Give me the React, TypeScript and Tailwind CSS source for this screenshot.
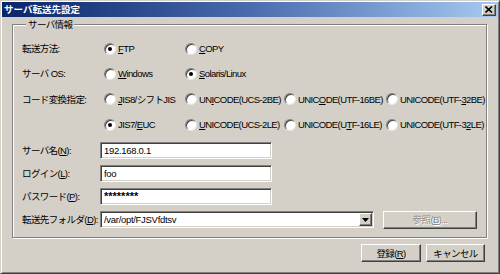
import type { ReactNode } from 'react';

const sunken =
  'border border-t-[#808080] border-l-[#808080] border-r-white border-b-white shadow-[inset_1px_1px_0_#404040,inset_-1px_-1px_0_#d4d0c8]';
const raised =
  'border border-t-white border-l-white border-r-[#404040] border-b-[#404040] shadow-[inset_-1px_-1px_0_#808080,inset_1px_1px_0_#d4d0c8]';

const K = ({ children }: { children: ReactNode }) => <span className="underline">{children}</span>;

const Radio = ({ checked = false, children }: { checked?: boolean; children: ReactNode }) => (
  <span className="flex items-center">
    <span className="shrink-0 flex items-center justify-center w-[12px] h-[12px] rounded-full bg-white border border-t-[#808080] border-l-[#808080] border-r-[#e8e6e0] border-b-[#e8e6e0] shadow-[inset_1px_1px_0_#404040]">
      {checked && <span className="w-[4px] h-[4px] rounded-full bg-black" />}
    </span>
    <span className="ml-[2px] whitespace-nowrap">{children}</span>
  </span>
);

const TextRow = ({
  label,
  value,
  first = false,
  secret = false,
}: {
  label: ReactNode;
  value: string;
  first?: boolean;
  secret?: boolean;
}) => (
  <div className={`flex items-center h-[23px] ${first ? 'mt-[2px]' : ''}`}>
    <span className="w-[78px] whitespace-nowrap">{label}</span>
    <div
      className={`w-[172px] h-[17px] bg-white flex items-center pl-[3px] ${
        secret ? 'text-[11px] font-bold tracking-normal' : 'text-[9.5px] tracking-[-0.3px]'
      } ${sunken}`}
    >
      {value}
    </div>
  </div>
);

export default function App() {
  return (
    <div className="w-[500px] h-[274px] bg-[#d4d0c8] flex flex-col p-[1px] border border-t-[#d4d0c8] border-l-[#d4d0c8] border-r-[#404040] border-b-[#404040] shadow-[inset_1px_1px_0_#fff,inset_-1px_-1px_0_#808080] text-[9.5px] tracking-[-0.6px] text-black leading-[13px] font-['Liberation_Sans','Noto_Sans_CJK_JP',sans-serif] select-none overflow-hidden">
      {/* title bar */}
      <div className="h-[15px] flex items-center bg-linear-to-r from-[#0a246a] via-[#4a6cae] to-[#a6caf0]">
        <span className="pl-[2px] text-white font-bold text-[9.5px] tracking-normal font-['Noto_Sans_CJK_JP',sans-serif]">
          サーバ転送先設定
        </span>
        <button
          type="button"
          className={`ml-auto mr-[2px] w-[14px] h-[12px] bg-[#d4d0c8] flex items-center justify-center ${raised}`}
        >
          <svg width="8" height="7" viewBox="0 0 8 7">
            <path d="M0.5 0.5 L7 6.5 M7 0.5 L0.5 6.5" stroke="#000" strokeWidth="1.6" />
          </svg>
        </button>
      </div>

      {/* server info group */}
      <fieldset className="mt-[1px] ml-[10px] mr-[11px] border border-[#808080] shadow-[1px_1px_0_#fff,inset_1px_1px_0_#fff] pl-[9px] pt-[5px] pb-[6px]">
        <legend className="ml-[4px] px-[2px] bg-[#d4d0c8]">サーバ情報</legend>

        <div className="flex items-center h-[25px]">
          <span className="w-[82px]">転送方法:</span>
          <div className="w-[81px]">
            <Radio checked><K>F</K>TP</Radio>
          </div>
          <Radio><K>C</K>OPY</Radio>
        </div>

        <div className="flex items-center h-[25px]">
          <span className="w-[82px]">サーバ OS:</span>
          <div className="w-[81px]">
            <Radio><K>W</K>indows</Radio>
          </div>
          <Radio checked><K>S</K>olaris/Linux</Radio>
        </div>

        <div className="flex items-center h-[26px]">
          <span className="w-[82px] whitespace-nowrap">コード変換指定:</span>
          <div className="w-[81px]">
            <Radio><K>J</K>IS8/シフトJIS</Radio>
          </div>
          <div className="w-[99px]">
            <Radio>UN<K>I</K>CODE(UCS-2BE)</Radio>
          </div>
          <div className="w-[102px]">
            <Radio>UNIC<K>O</K>DE(UTF-16BE)</Radio>
          </div>
          <Radio>UNICODE(UTF-<K>3</K>2BE)</Radio>
        </div>

        <div className="flex items-center h-[25px]">
          <span className="w-[82px]" />
          <div className="w-[81px]">
            <Radio checked>JIS7/<K>E</K>UC</Radio>
          </div>
          <div className="w-[99px]">
            <Radio><K>U</K>NICODE(UCS-2LE)</Radio>
          </div>
          <div className="w-[102px]">
            <Radio>UNICODE(U<K>T</K>F-16LE)</Radio>
          </div>
          <Radio>UNICODE(UTF-3<K>2</K>LE)</Radio>
        </div>

        <TextRow first label={<>サーバ名(<K>N</K>):</>} value="192.168.0.1" />
        <TextRow label={<>ログイン(<K>L</K>):</>} value="foo" />
        <TextRow secret label={<>パスワード(<K>P</K>):</>} value="********" />

        <div className="flex items-center h-[23px]">
          <span className="w-[78px] whitespace-nowrap">転送先フォルダ(<K>D</K>):</span>
          <div className={`w-[274px] h-[17px] bg-white flex ${sunken}`}>
            <span className="flex-1 flex items-center pl-[3px] text-[9.5px] tracking-[-0.3px]">/var/opt/FJSVfdtsv</span>
            <span className={`w-[13px] h-[13px] mt-[1px] mr-[1px] bg-[#d4d0c8] flex items-center justify-center ${raised}`}>
              <svg width="7" height="4" viewBox="0 0 7 4">
                <path d="M0 0 H7 L3.5 4 Z" fill="#000" />
              </svg>
            </span>
          </div>
          <button
            type="button"
            disabled
            className={`ml-[9px] w-[94px] h-[18px] bg-[#d4d0c8] text-[#8a8a8a] [text-shadow:1px_1px_0_#fff] ${raised}`}
          >
            参照(<K>B</K>)...
          </button>
        </div>
      </fieldset>

      {/* footer buttons */}
      <div className="flex justify-end gap-[5px] mt-[6px] mr-[13px]">
        <button type="button" className={`w-[60px] h-[18px] bg-[#d4d0c8] ${raised}`}>
          登録(<K>R</K>)
        </button>
        <button type="button" className={`w-[59px] h-[18px] bg-[#d4d0c8] ${raised}`}>
          キャンセル
        </button>
      </div>
    </div>
  );
}
